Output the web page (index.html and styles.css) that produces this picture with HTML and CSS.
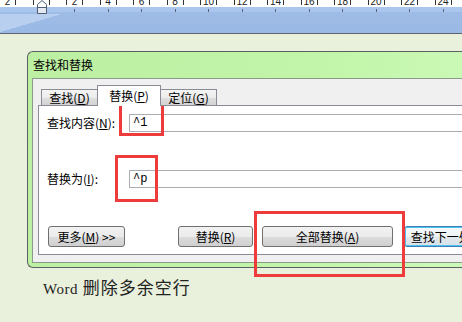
FILE: index.html
```html
<!DOCTYPE html>
<html lang="zh-CN">
<head>
<meta charset="utf-8">
<title>Word 删除多余空行</title>
<link rel="stylesheet" href="styles.css">
</head>
<body>
<div class="page">
  <div class="ruler">
    <div class="ruler-nums">
      <span class="rc"><i></i><b>2</b><i></i></span>
      <span class="rc"><i></i><b></b><i></i></span>
      <span class="rc"><i></i><b>2</b><i></i></span>
      <span class="rc"><i></i><b>4</b><i></i></span>
      <span class="rc"><i></i><b>6</b><i></i></span>
      <span class="rc"><i></i><b>8</b><i></i></span>
      <span class="rc"><i></i><b>10</b><i></i></span>
      <span class="rc"><i></i><b>12</b><i></i></span>
      <span class="rc"><i></i><b>14</b><i></i></span>
      <span class="rc"><i></i><b>16</b><i></i></span>
      <span class="rc"><i></i><b>18</b><i></i></span>
      <span class="rc"><i></i><b>20</b><i></i></span>
      <span class="rc"><i></i><b>22</b><i></i></span>
      <span class="rc"><i></i><b>24</b><i></i></span>
      <span class="rc"><i></i><b>26</b><i></i></span>
    </div>
    <div class="ruler-band">
      <div class="ruler-ticks">
        <span class="tc"></span>
        <span class="tc"></span>
        <span class="tc"><i></i></span>
        <span class="tc"><i></i></span>
        <span class="tc"><i></i></span>
        <span class="tc"><i></i></span>
        <span class="tc"><i></i></span>
        <span class="tc"><i></i></span>
        <span class="tc"><i></i></span>
        <span class="tc"><i></i></span>
        <span class="tc"><i></i></span>
        <span class="tc"><i></i></span>
        <span class="tc"><i></i></span>
        <span class="tc"><i></i></span>
        <span class="tc"><i></i></span>
      </div>
    </div>
    <svg class="indent" width="10" height="14" viewBox="0 0 10 14">
      <path d="M0.5 13.5 V4.5 L5 0.5 L9.5 4.5 V13.5 Z" fill="#ffffff" stroke="#4f5e77"/>
      <rect x="1" y="8" width="8" height="5" fill="#e4e9f1"/>
      <path d="M0.5 7.5 H9.5" stroke="#4f5e77"/>
    </svg>
  </div>

  <div class="dialog">
    <div class="titlebar">查找和替换</div>
    <div class="client">
      <div class="tabs">
        <div class="tab first">查找(<u>D</u>)</div>
        <div class="tab active">替换(<u>P</u>)</div>
        <div class="tab last">定位(<u>G</u>)</div>
      </div>
      <div class="panel">
        <div class="row">
          <span class="lbl">查找内容(<u>N</u>):</span>
          <div class="field">^1</div>
        </div>
        <div class="row row2">
          <span class="lbl">替换为(<u>I</u>):</span>
          <div class="field">^p</div>
        </div>
        <div class="buttons">
          <div class="btn b1">更多(<u>M</u>) &gt;&gt;</div>
          <div class="btn b2">替换(<u>R</u>)</div>
          <div class="btn b3">全部替换(<u>A</u>)</div>
          <div class="btn b4">查找下一处(<u>F</u>)</div>
        </div>
      </div>
    </div>
  </div>

  <p class="caption"><span class="latin">Word</span> 删除多余空行</p>

  <div class="mark m1"></div>
  <div class="mark m2"></div>
  <div class="mark m3"></div>
</div>
</body>
</html>
```

FILE: styles.css
```css
* { box-sizing: border-box; }
html, body { margin: 0; padding: 0; }
body {
  width: 462px;
  height: 322px;
  overflow: hidden;
  background: #e9f0dc;
  font-family: "Noto Sans CJK SC", "Noto Sans", sans-serif;
  font-size: 12px;
  color: #000;
}
.page {
  position: relative;
  width: 462px;
  height: 322px;
  overflow: hidden;
}

/* ruler */
.ruler {
  position: relative;
  height: 34px;
  border-bottom: 1px solid #5d6470;
}
.ruler-nums {
  display: flex;
  height: 7px;
  margin-left: -9.25px;
  background: #ffffff;
  overflow: hidden;
}
.rc {
  flex: none;
  width: 33.5px;
  display: flex;
  justify-content: center;
  align-items: flex-start;
}
.rc i {
  display: block;
  width: 1px;
  height: 5px;
  background: #333;
}
.rc b {
  display: block;
  width: 15px;
  margin-top: -3px;
  font: normal 10px/10px "Liberation Sans", sans-serif;
  text-align: center;
  color: #222;
}
.ruler-band {
  height: 26px;
  background:
    linear-gradient(to bottom right, #b8cff0 50%, rgba(184, 207, 240, 0) 50%) 0 7px / 62px 18px no-repeat,
    linear-gradient(#abc6ec 0, #abc6ec 5px, #9ebce6 5px, #9ab9e4 100%);
}
.ruler-ticks {
  display: flex;
  margin-left: -9.25px;
  padding-top: 2px;
}
.tc {
  flex: none;
  width: 33.5px;
  height: 3px;
  display: flex;
  justify-content: center;
}
.tc i {
  display: block;
  width: 1px;
  height: 3px;
  background: #5a6478;
}
.indent {
  position: absolute;
  left: 37px;
  top: 0;
}

/* dialog */
.dialog {
  margin: 17px 0 0 27px;
  width: 460px;
  border: 1px solid #5a6063;
  border-right: 0;
  border-radius: 6px 0 0 6px;
  background: linear-gradient(100deg, #bcefa2 0%, #c2f5a9 60%, #cefbbb 100%);
  padding: 0 0 4px 4px;
}
.titlebar {
  height: 26px;
  line-height: 26px;
  padding-left: 1px;
  font-size: 12px;
  color: #000;
}
.client {
  border: 1px solid #8b9a89;
  border-right: 0;
  background: #f0f0f0;
  padding: 6px 0 7px 5px;
}
.tabs {
  position: relative;
  z-index: 1;
  display: flex;
  align-items: flex-end;
  height: 21px;
  margin-bottom: -1px;
  padding-left: 3px;
}
.tab {
  flex: none;
  width: 56px;
  height: 17px;
  border: 1px solid #898c95;
  background: linear-gradient(#f4f4f4, #ececec 50%, #dfdfdf 50%, #d3d3d3);
  text-align: center;
  line-height: 15px;
}
.tab.first { border-right: 0; }
.tab.last { border-left: 0; }
.tab.active {
  width: 64px;
  height: 21px;
  border-bottom: 0;
  background: #ffffff;
  line-height: 19px;
}
.panel {
  border: 1px solid #898c95;
  border-right: 0;
  background: #ffffff;
  padding: 8px 0 7px 8px;
}
.row {
  display: flex;
  align-items: center;
  height: 18px;
}
.row2 { margin-top: 38px; }
.lbl {
  flex: none;
  width: 82px;
  line-height: 18px;
}
.field {
  flex: 1;
  height: 18px;
  border: 1px solid #abadb3;
  border-right: 0;
  background: #ffffff;
  padding-left: 3px;
  font: 12px/16px "Liberation Mono", monospace;
  color: #000;
}
.buttons {
  display: flex;
  height: 21px;
  margin-top: 38px;
}
.btn {
  flex: none;
  height: 21px;
  border: 1px solid #707070;
  border-radius: 3px;
  background: linear-gradient(#f2f2f2, #ebebeb 50%, #dddddd 50%, #cfcfcf);
  text-align: center;
  line-height: 19px;
  white-space: nowrap;
  overflow: hidden;
}
.b1 { width: 77px; margin-left: 1px; }
.b2 { width: 75px; margin-left: 53px; }
.b3 { width: 131px; margin-left: 9px; }
.b4 {
  width: 88px;
  margin-left: 11px;
  border-color: #3c7fb1;
  box-shadow: inset 0 0 0 1px #4cc2f5;
  background: linear-gradient(#f6f9fb, #eef3f6 50%, #e2e9ee 50%, #d8e1e7);
}

/* caption */
.caption {
  margin: 9px 0 0 43px;
  font-size: 17px;
  line-height: 20px;
  letter-spacing: 1px;
  color: #222;
}
.latin {
  font: 15px "Liberation Serif", serif;
  letter-spacing: 0.5px;
}

/* annotation boxes */
.mark {
  position: absolute;
  border: 3px solid #ee3b3b;
}
.m1 { left: 119px; top: 103px; width: 45px; height: 33px; }
.m2 { left: 115px; top: 155px; width: 43px; height: 47px; }
.m3 { left: 254px; top: 211px; width: 151px; height: 66px; }
```
